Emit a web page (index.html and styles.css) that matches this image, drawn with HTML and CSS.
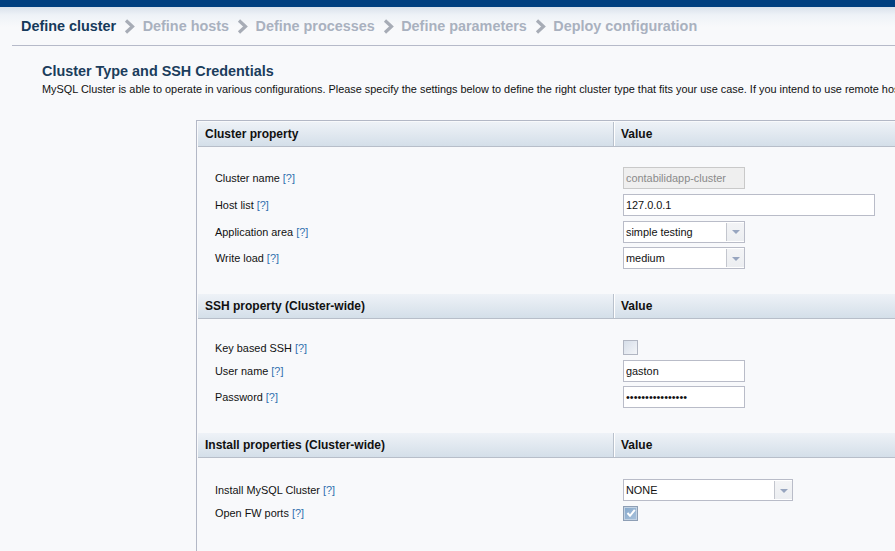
FILE: index.html
```html
<!DOCTYPE html>
<html>
<head>
<meta charset="utf-8">
<title>Define cluster</title>
<link rel="stylesheet" href="styles.css">
</head>
<body>
<div class="topbar"></div>
<div class="crumbwrap">
  <nav class="crumbs">
    <span class="crumb active">Define cluster</span>
    <svg class="chev" width="11" height="15" viewBox="0 0 11 15"><polyline points="2,1.5 8.5,7.5 2,13.5" /></svg>
    <span class="crumb">Define hosts</span>
    <svg class="chev" width="11" height="15" viewBox="0 0 11 15"><polyline points="2,1.5 8.5,7.5 2,13.5" /></svg>
    <span class="crumb">Define processes</span>
    <svg class="chev" width="11" height="15" viewBox="0 0 11 15"><polyline points="2,1.5 8.5,7.5 2,13.5" /></svg>
    <span class="crumb">Define parameters</span>
    <svg class="chev" width="11" height="15" viewBox="0 0 11 15"><polyline points="2,1.5 8.5,7.5 2,13.5" /></svg>
    <span class="crumb">Deploy configuration</span>
  </nav>
</div>
<main class="page">
  <h1 class="title">Cluster Type and SSH Credentials</h1>
  <p class="desc">MySQL Cluster is able to operate in various configurations. Please specify the settings below to define the right cluster type that fits your use case. If you intend to use remote hosts, please provide the SSH credentials.</p>

  <div class="panel">
    <section class="group">
      <div class="ghead"><div class="hc1">Cluster property</div><div class="hc2">Value</div></div>
      <div class="gbody">
        <div class="row"><div class="lbl">Cluster name <span class="help">[?]</span></div><div class="val"><input class="field w122 disabled" type="text" value="contabilidapp-cluster" disabled></div></div>
        <div class="row"><div class="lbl">Host list <span class="help">[?]</span></div><div class="val"><input class="field w252" type="text" value="127.0.0.1"></div></div>
        <div class="row"><div class="lbl">Application area <span class="help">[?]</span></div><div class="val"><div class="select w122"><span class="seltext">simple testing</span><span class="selbtn"><i class="tri"></i></span></div></div></div>
        <div class="row"><div class="lbl">Write load <span class="help">[?]</span></div><div class="val"><div class="select w122"><span class="seltext">medium</span><span class="selbtn"><i class="tri"></i></span></div></div></div>
      </div>
    </section>

    <section class="group">
      <div class="ghead"><div class="hc1">SSH property (Cluster-wide)</div><div class="hc2">Value</div></div>
      <div class="gbody">
        <div class="row short"><div class="lbl">Key based SSH <span class="help">[?]</span></div><div class="val"><span class="cb"></span></div></div>
        <div class="row"><div class="lbl">User name <span class="help">[?]</span></div><div class="val"><input class="field w122" type="text" value="gaston"></div></div>
        <div class="row"><div class="lbl">Password <span class="help">[?]</span></div><div class="val"><input class="field w122" type="password" value="gastongastongast"></div></div>
      </div>
    </section>

    <section class="group">
      <div class="ghead"><div class="hc1">Install properties (Cluster-wide)</div><div class="hc2">Value</div></div>
      <div class="gbody">
        <div class="row"><div class="lbl">Install MySQL Cluster <span class="help">[?]</span></div><div class="val"><div class="select w170"><span class="seltext">NONE</span><span class="selbtn"><i class="tri"></i></span></div></div></div>
        <div class="row short"><div class="lbl">Open FW ports <span class="help">[?]</span></div><div class="val"><span class="cb checked"><svg width="12" height="12" viewBox="0 0 12 12"><polyline points="2.5,6 5,8.8 9.8,2.8" /></svg></span></div></div>
      </div>
    </section>
  </div>
</main>
</body>
</html>
```
FILE: styles.css
```css
html, body {
  margin: 0;
  padding: 0;
}
body {
  background: #f8f9fb;
  font-family: "Liberation Sans", Arial, sans-serif;
  color: #111;
  overflow: hidden;
  width: 895px;
  height: 551px;
}
.topbar {
  height: 7px;
  background: #003f80;
}
.crumbwrap {
  background: linear-gradient(#d9e1ec 0, #eef2f7 8px, #f8f9fb 20px);
}
.crumbs {
  margin-left: 12px;
  padding-left: 9px;
  height: 38px;
  display: flex;
  align-items: center;
  border-bottom: 1px solid #b6bac9;
  white-space: nowrap;
}
.crumb {
  font-size: 14.4px;
  font-weight: bold;
  color: #a9b1bf;
}
.crumb.active {
  color: #163a5b;
}
.chev {
  margin: 0 7.5px 0 8px;
  display: block;
}
.chev polyline {
  fill: none;
  stroke: #a7acb6;
  stroke-width: 3.2;
}
.page {
  padding-left: 42px;
}
.title {
  margin: 16px 0 0 0;
  font-size: 14.4px;
  line-height: 18px;
  font-weight: bold;
  color: #1b3d5c;
}
.desc {
  margin: 1.5px 0 0 0;
  font-size: 10.9px;
  line-height: 14px;
  white-space: nowrap;
  color: #111;
}
.panel {
  margin: 24px 0 0 154px;
  width: 760px;
  border: 1px solid #b3b8c6;
  border-right: none;
  padding: 1px 0 0 1px;
  height: 460px;
}
.ghead {
  display: grid;
  grid-template-columns: 415px 1fr;
  height: 24px;
  border-bottom: 1px solid #b7bec9;
  background: linear-gradient(#eef2f7, #d4dfe9);
  font-size: 12px;
  font-weight: bold;
  line-height: 24px;
  color: #111;
}
.hc1 {
  padding-left: 7px;
}
.hc2 {
  border-left: 1px solid #b9c1cc;
  box-shadow: inset 1px 0 0 #ffffff;
  padding-left: 7px;
}
.gbody {
  padding: 18.6px 0 22.5px 0;
}
.row {
  display: grid;
  grid-template-columns: 415px 1fr;
  height: 26.67px;
  align-items: center;
  font-size: 10.9px;
}
.row.short {
  height: 19.5px;
}
.lbl {
  padding-left: 17px;
  color: #111;
}
.help {
  color: #2f6fae;
}
.val {
  padding-left: 10px;
  display: flex;
  align-items: center;
}
.field {
  box-sizing: border-box;
  height: 22px;
  border: 1px solid #b9bcc8;
  background: #fff;
  font-family: "Liberation Sans", Arial, sans-serif;
  font-size: 10.9px;
  color: #111;
  padding: 0 0 0 2px;
  margin: 0;
  outline: none;
}
.field.disabled {
  background: #efefef;
  border-color: #c9c9c9;
  color: #8a8a8a;
}
.w122 { width: 122px; }
.w252 { width: 252px; }
.w170 { width: 170px; }
.select {
  box-sizing: border-box;
  height: 22px;
  border: 1px solid #b9bcc8;
  background: #fff;
  display: flex;
  align-items: stretch;
}
.seltext {
  flex: 1;
  font-size: 10.9px;
  line-height: 20px;
  padding-left: 2px;
  color: #111;
}
.selbtn {
  width: 17px;
  margin: 1px 0 1px 0;
  border-left: 1px solid #c3c6ce;
  background: linear-gradient(#f3f4f6, #eceef1);
  display: flex;
  align-items: center;
  justify-content: center;
}
.tri {
  width: 0;
  height: 0;
  border-left: 4px solid transparent;
  border-right: 4px solid transparent;
  border-top: 4px solid #97a5bf;
  margin-top: 1px;
}
.cb {
  box-sizing: border-box;
  width: 15px;
  height: 15px;
  border: 1px solid #b1b6c2;
  background: linear-gradient(135deg, #d6dee9, #f3f5f8);
  display: flex;
  align-items: center;
  justify-content: center;
}
.cb.checked {
  border-color: #8e9fb5;
  background: linear-gradient(135deg, #86a8cb, #a9c2dc);
  box-shadow: inset 0 0 0 1px #c3d3e4;
}
.cb svg polyline {
  fill: none;
  stroke: #ffffff;
  stroke-width: 2;
}
```
